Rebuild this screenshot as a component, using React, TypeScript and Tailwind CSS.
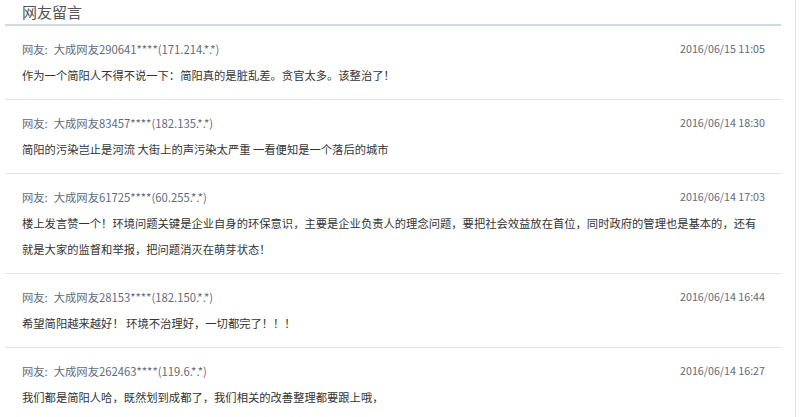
import React from "react";

type Item = { user: string; ip: string; date: string; text: string };

const items: Item[] = [
  {
    user: "大成网友290641****",
    ip: "(171.214.*.*)",
    date: "2016/06/15 11:05",
    text: "作为一个简阳人不得不说一下：简阳真的是脏乱差。贪官太多。该整治了！",
  },
  {
    user: "大成网友83457****",
    ip: "(182.135.*.*)",
    date: "2016/06/14 18:30",
    text: "简阳的污染岂止是河流 大街上的声污染太严重 一看便知是一个落后的城市",
  },
  {
    user: "大成网友61725****",
    ip: "(60.255.*.*)",
    date: "2016/06/14 17:03",
    text: "楼上发言赞一个！环境问题关键是企业自身的环保意识，主要是企业负责人的理念问题，要把社会效益放在首位，同时政府的管理也是基本的，还有就是大家的监督和举报，把问题消灭在萌芽状态！",
  },
  {
    user: "大成网友28153****",
    ip: "(182.150.*.*)",
    date: "2016/06/14 16:44",
    text: "希望简阳越来越好！ 环境不治理好，一切都完了！！！",
  },
  {
    user: "大成网友262463****",
    ip: "(119.6.*.*)",
    date: "2016/06/14 16:27",
    text: "我们都是简阳人哈，既然划到成都了，我们相关的改善整理都要跟上哦，",
  },
];

export default function App() {
  return (
    <div
      className="w-[800px] h-[417px] overflow-hidden bg-white"
      style={{ fontFamily: '"Noto Sans CJK SC", "Noto Sans", sans-serif' }}
    >
      <div className="w-[796px] h-[417px] border-r border-[#e6e6e6] pl-[5px]">
        <div className="w-[776px]">
          <div className="h-[26px] border-b-2 border-[#cfd9e8] pl-[17px] text-[15px] leading-[24px] text-[#555]">
            网友留言
          </div>
          {items.map((it, i) => (
            <div
              key={i}
              className="pl-[17px] pr-[16px] pt-[13px] pb-[11px] border-b border-[#e3e3e3]"
            >
              <div className="flex justify-between items-center text-[11.3px] leading-[20px] text-[#5f6b7a]">
                <span>
                  网友:<span className="ml-[6px]">{it.user}</span>
                  {it.ip}
                </span>
                <span className="text-[10.7px]">{it.date}</span>
              </div>
              <div className="mt-[3px] text-[11.3px] leading-[26px] text-[#333]">
                {it.text}
              </div>
            </div>
          ))}
        </div>
      </div>
    </div>
  );
}
